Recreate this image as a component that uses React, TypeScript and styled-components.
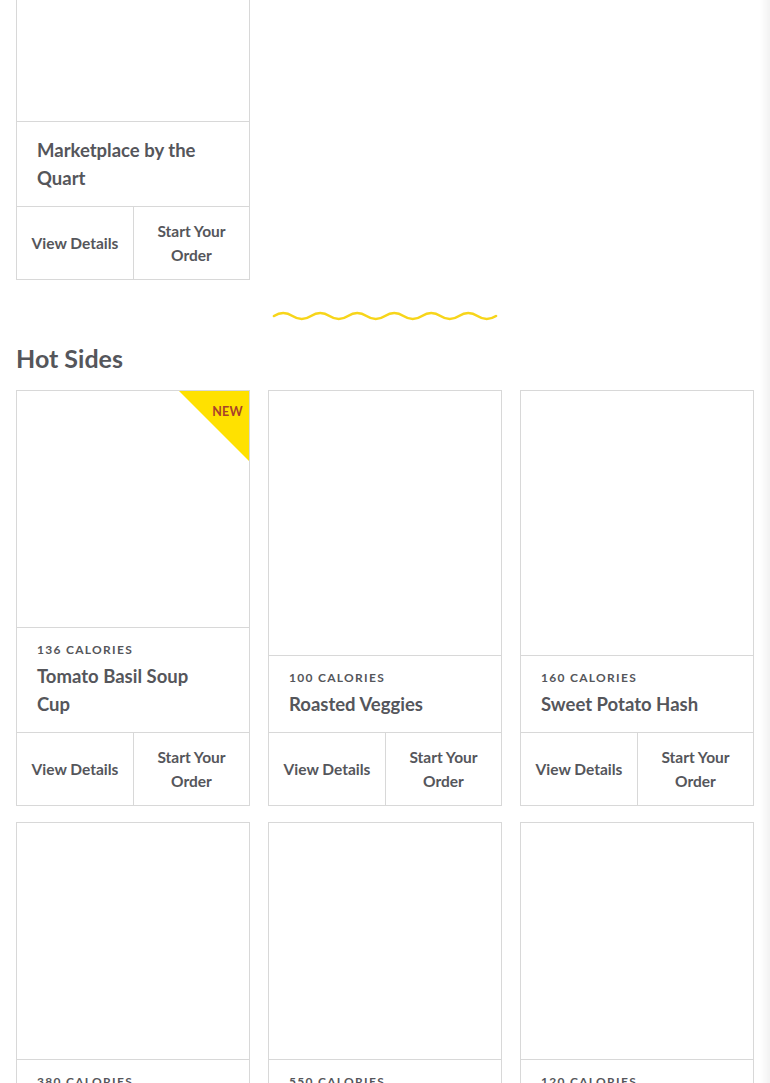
import React from "react";
import styled, { createGlobalStyle } from "styled-components";

const Global = createGlobalStyle`
  html, body { margin: 0; padding: 0; background: #fff; overflow: hidden; }
  body { font-family: "Lato", "Open Sans", sans-serif; color: #55565b; }
  * { box-sizing: border-box; }
`;

const Page = styled.div`
  padding: 0 16px;
  display: flex;
  flex-direction: column;
`;

const Grid = styled.div`
  display: grid;
  grid-template-columns: repeat(3, 1fr);
  column-gap: 18px;
  row-gap: 16px;
`;

const Card = styled.div<{ $cut?: boolean }>`
  position: relative;
  display: flex;
  flex-direction: column;
  border: 1px solid #d8d8d8;
  border-top-width: ${(p) => (p.$cut ? 0 : 1)}px;
  background: #fff;
`;

const ImageArea = styled.div<{ $h?: number }>`
  flex: 1 1 auto;
  min-height: ${(p) => p.$h ?? 237}px;
  border-bottom: 1px solid #d8d8d8;
`;

const Info = styled.div`
  padding: 14px 30px 14px 20px;
  display: flex;
  flex-direction: column;
`;

const Calories = styled.div`
  font-size: 12px;
  line-height: 16px;
  font-weight: 700;
  letter-spacing: 1.3px;
  text-transform: uppercase;
  margin-bottom: 4px;
`;

const Title = styled.div`
  font-size: 18.5px;
  line-height: 28px;
  font-weight: 700;
`;

const Actions = styled.div`
  display: grid;
  grid-template-columns: 116px 1fr;
  border-top: 1px solid #d8d8d8;
  height: 73px;
`;

const Action = styled.div<{ $divider?: boolean }>`
  display: flex;
  align-items: center;
  justify-content: center;
  text-align: center;
  font-size: 15.5px;
  line-height: 24px;
  font-weight: 700;
  padding: 0 12px;
  border-left: ${(p) => (p.$divider ? "1px solid #d8d8d8" : "none")};
`;

const Badge = styled.div`
  position: absolute;
  top: 0;
  right: 0;
  width: 70px;
  height: 70px;
  background: #ffe100;
  clip-path: polygon(0 0, 100% 0, 100% 100%);
`;

const BadgeText = styled.span`
  position: absolute;
  top: 13px;
  right: 6px;
  font-size: 12.5px;
  font-weight: 700;
  color: #a8412a;
  letter-spacing: 0.3px;
`;

const Divider = styled.div`
  display: flex;
  justify-content: center;
  padding: 30px 0 20px;
`;

const Heading = styled.h2`
  margin: 0 0 16px;
  font-size: 25px;
  line-height: 32px;
  font-weight: 700;
`;

const EdgeShade = styled.div`
  position: fixed;
  top: 0;
  right: 0;
  width: 10px;
  height: 100%;
  background: linear-gradient(to right, rgba(0, 0, 0, 0), rgba(0, 0, 0, 0.05));
  pointer-events: none;
`;

const Wave = () => {
  const periods = 6;
  const w = 37;
  let d = "M2 6";
  for (let i = 0; i < periods; i++) {
    const x = 2 + i * w;
    d += ` Q ${x + w / 4} 0 ${x + w / 2} 6 Q ${x + (3 * w) / 4} 12 ${x + w} 6`;
  }
  return (
    <svg width="226" height="12" viewBox="0 0 226 12">
      <path d={d} fill="none" stroke="#f7d51a" strokeWidth="2.6" strokeLinecap="round" />
    </svg>
  );
};

type Item = { name: string; cal?: string; isNew?: boolean };

const ItemCard = ({ item, cut, imgH }: { item: Item; cut?: boolean; imgH?: number }) => (
  <Card $cut={cut}>
    <ImageArea $h={imgH} />
    {item.isNew && (
      <Badge>
        <BadgeText>NEW</BadgeText>
      </Badge>
    )}
    <Info>
      {item.cal && <Calories>{item.cal} Calories</Calories>}
      <Title>{item.name}</Title>
    </Info>
    <Actions>
      <Action>View Details</Action>
      <Action $divider>Start Your Order</Action>
    </Actions>
  </Card>
);

const hotSides: Item[] = [
  { name: "Tomato Basil Soup Cup", cal: "136", isNew: true },
  { name: "Roasted Veggies", cal: "100" },
  { name: "Sweet Potato Hash", cal: "160" },
  { name: "Mashed Potatoes", cal: "380" },
  { name: "Mac & Cheese", cal: "550" },
  { name: "Garlic Green Beans", cal: "120" },
];

export default function App() {
  return (
    <>
      <Global />
      <Page>
        <Grid>
          <ItemCard item={{ name: "Marketplace by the Quart" }} cut imgH={122} />
        </Grid>
        <Divider>
          <Wave />
        </Divider>
        <Heading>Hot Sides</Heading>
        <Grid>
          {hotSides.map((it) => (
            <ItemCard key={it.name} item={it} />
          ))}
        </Grid>
      </Page>
      <EdgeShade />
    </>
  );
}
